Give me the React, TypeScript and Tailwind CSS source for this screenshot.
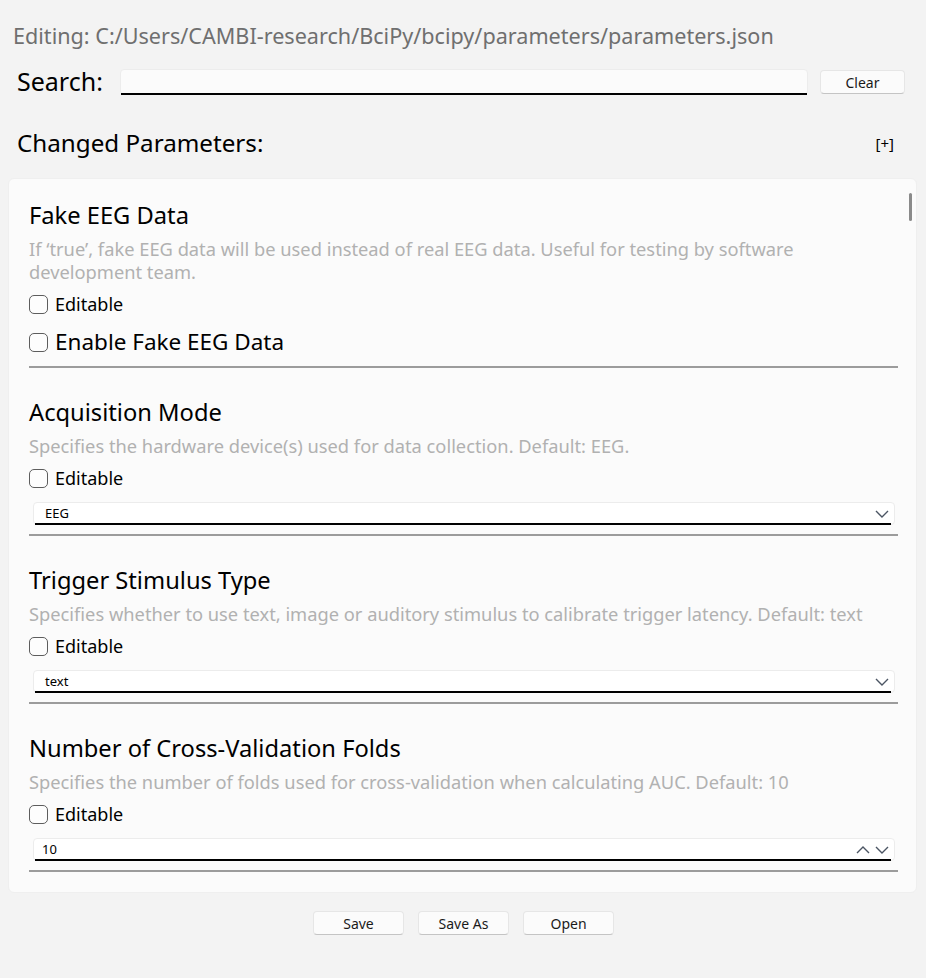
import React from 'react';

const font = "font-['Noto_Sans',Tahoma,sans-serif]";

function Chevron({ up = false }: { up?: boolean }) {
  return (
    <svg width="14" height="8" viewBox="0 0 14 8" className="shrink-0">
      <polyline
        points={up ? '1,7 7,1 13,7' : '1,1 7,7 13,1'}
        fill="none"
        stroke="#4b5563"
        strokeWidth="1.4"
      />
    </svg>
  );
}

function Check({ label, big = false }: { label: string; big?: boolean }) {
  return (
    <label className="flex items-center gap-[7px]">
      <span className="w-[19px] h-[19px] rounded-[5px] border border-[#5d5d5d] bg-[#fdfdfd] shrink-0" />
      <span className={big ? 'text-[22.5px] leading-[28px] text-black' : 'text-[18px] leading-[26px] text-black'}>
        {label}
      </span>
    </label>
  );
}

function Field({ value, spin = false }: { value: string; spin?: boolean }) {
  return (
    <div className="ml-[4px] mr-[3px] h-[23px] bg-white rounded-[4px] border border-[#ececec] flex items-center relative">
      <span className={spin ? 'pl-[8px] text-[13px] text-black' : 'pl-[11px] text-[13px] text-black'}>{value}</span>
      <div className="ml-auto mr-[5px] flex items-center gap-[5px]">
        {spin && <Chevron up />}
        <Chevron />
      </div>
      <div className="absolute left-[1px] right-[3px] bottom-[-1px] h-[2px] bg-black" />
    </div>
  );
}

type Param = {
  title: string;
  desc: string;
  kind: 'bool' | 'select' | 'spin';
  value: string;
};

const params: Param[] = [
  {
    title: 'Fake EEG Data',
    desc: 'If \u2018true\u2019, fake EEG data will be used instead of real EEG data. Useful for testing by software development team.',
    kind: 'bool',
    value: 'Enable Fake EEG Data',
  },
  {
    title: 'Acquisition Mode',
    desc: 'Specifies the hardware device(s) used for data collection. Default: EEG.',
    kind: 'select',
    value: 'EEG',
  },
  {
    title: 'Trigger Stimulus Type',
    desc: 'Specifies whether to use text, image or auditory stimulus to calibrate trigger latency. Default: text',
    kind: 'select',
    value: 'text',
  },
  {
    title: 'Number of Cross-Validation Folds',
    desc: 'Specifies the number of folds used for cross-validation when calculating AUC. Default: 10',
    kind: 'spin',
    value: '10',
  },
];

function ParamItem({ p, first }: { p: Param; first: boolean }) {
  return (
    <div className={first ? '' : 'mt-[28px]'}>
      <div className="text-[23.7px] leading-[32px] text-black">{p.title}</div>
      <div className="mt-[6px] text-[18.3px] leading-[23px] text-[#b1b1b1]">{p.desc}</div>
      <div className="mt-[8px]">
        <Check label="Editable" />
      </div>
      <div className="mt-[11px]">
        {p.kind === 'bool' && <Check label={p.value} big />}
        {p.kind === 'select' && <Field value={p.value} />}
        {p.kind === 'spin' && <Field value={p.value} spin />}
      </div>
      {/* the checkbox row sits a pixel higher than the combo boxes */}
      <div className={first ? 'mt-[10px] h-[2px] bg-[#9c9c9c]' : 'mt-[9px] h-[2px] bg-[#9c9c9c]'} />
    </div>
  );
}

function Btn({ children, w }: { children: React.ReactNode; w: string }) {
  return (
    <button
      type="button"
      className={`${w} h-[24px] rounded-[4px] bg-[#fbfbfb] border border-[#e6e6e6] border-b-[#c4c4c4] text-[14px] text-[#1a1a1a] flex items-center justify-center`}
    >
      {children}
    </button>
  );
}

export default function App() {
  return (
    <div className={`w-[926px] h-[978px] bg-[#f3f3f3] flex flex-col ${font}`}>
      <div className="pt-[22px] pl-[13px] text-[21.6px] leading-[28px] text-[#6f6f6f]">
        Editing: C:/Users/CAMBI-research/BciPy/bcipy/parameters/parameters.json
      </div>

      <div className="mt-[19px] flex items-center h-[26px] pl-[17px] pr-[21px]">
        <span className="text-[25px] text-black w-[103px] shrink-0">Search:</span>
        <div className="w-[688px] h-[26px] bg-[#fbfbfb] rounded-[4px] border border-[#ececec] relative">
          <div className="absolute left-0 right-0 bottom-[-1px] h-[2px] bg-black" />
        </div>
        <div className="ml-auto">
          <Btn w="w-[85px]">Clear</Btn>
        </div>
      </div>

      <div className="mt-[33px] flex items-center h-[30px] pl-[17px] pr-[32px]">
        <span className="text-[24.2px] text-black">Changed Parameters:</span>
        <span className="ml-auto text-[15px] text-black">[+]</span>
      </div>

      <div className="mt-[20px] mx-[8px] w-[909px] h-[715px] rounded-[6px] bg-[#fbfbfb] border border-[#efefef] relative overflow-hidden">
        <div className="pt-[20px] pl-[20px] pr-[18px]">
          {params.map((p, i) => (
            <ParamItem key={p.title} p={p} first={i === 0} />
          ))}
        </div>
        <div className="absolute right-[4px] top-[14px] w-[3px] h-[28px] rounded-full bg-[#8a8a8a]" />
      </div>

      <div className="mt-[18px] flex justify-center gap-[14px] pl-[1px]">
        <Btn w="w-[91px]">Save</Btn>
        <Btn w="w-[91px]">Save As</Btn>
        <Btn w="w-[91px]">Open</Btn>
      </div>
    </div>
  );
}
